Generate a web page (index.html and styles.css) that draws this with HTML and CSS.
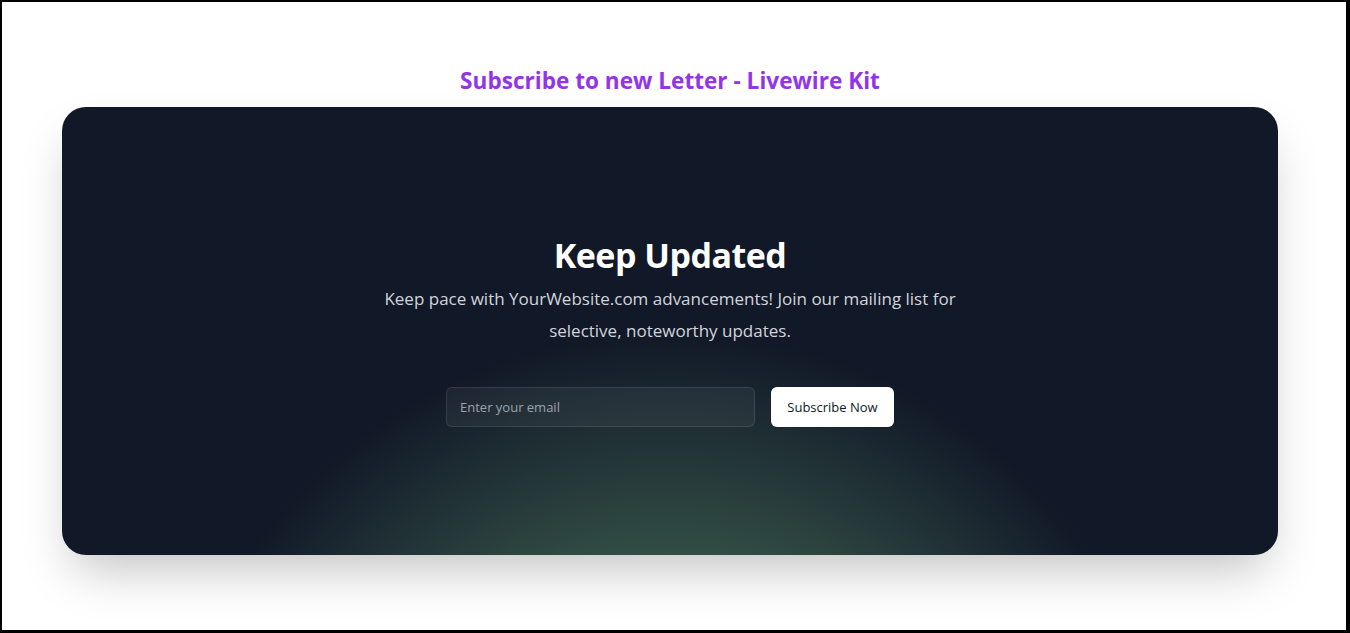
FILE: index.html
```html
<!DOCTYPE html>
<html lang="en">
<head>
  <meta charset="UTF-8" />
  <meta name="viewport" content="width=device-width, initial-scale=1.0"/>
  <title>Subscribe to new Letter - Livewire Kit</title>
  <link rel="stylesheet" href="styles.css">
</head>
<body>
  <div class="frame">
    <div class="page">
      <h2 class="page-title">Subscribe to new Letter - Livewire Kit</h2>

      <div class="wrap">
        <section class="newsletter">
          <h3>Keep Updated</h3>
          <p>Keep pace with YourWebsite.com advancements! Join our mailing list for selective, noteworthy updates.</p>

          <form class="subscribe" onsubmit="return false">
            <label for="email" class="sr-only">Email address</label>
            <input id="email" type="email" name="email" placeholder="Enter your email" autocomplete="email"/>
            <button type="submit">Subscribe Now</button>
          </form>
        </section>
      </div>
    </div>
  </div>
</body>
</html>
```

FILE: styles.css
```css
* {
  box-sizing: border-box;
}
body {
  margin: 0;
  background: white;
  font-family: "Open Sans", "Noto Sans", Arial, sans-serif;
}
.frame {
  height: 633px;
  border-style: solid;
  border-color: black;
  border-width: 2px 4px 3px 2px;
  padding-right: 8px;
  overflow: hidden;
}
.page {
  padding-top: 63px;
}
.page-title {
  margin: 0 0 10px;
  text-align: center;
  color: #9333ea;
  font-size: 22.6px;
  line-height: 32px;
  font-weight: 700;
}
.wrap {
  max-width: 1280px;
  margin: 0 auto;
  padding: 0 32px;
}
.newsletter {
  position: relative;
  overflow: hidden;
  border-radius: 24px;
  padding: 128px 24px;
  text-align: center;
  background:
    radial-gradient(circle 512px at 50% 736px, rgb(92,146,108) 0%, rgba(17,24,39,0) 100%),
    #111827;
  box-shadow: 0 25px 50px -12px rgba(0,0,0,0.25);
}
.newsletter h3 {
  margin: 0;
  color: white;
  font-size: 34px;
  line-height: 40px;
  font-weight: 700;
  letter-spacing: -0.5px;
}
.newsletter p {
  max-width: 576px;
  margin: 8px auto 0;
  color: #d1d5db;
  font-size: 17px;
  line-height: 32px;
}
.subscribe {
  display: flex;
  gap: 16px;
  max-width: 448px;
  margin: 40px auto 0;
}
.subscribe input {
  flex: 1 1 auto;
  min-width: 0;
  height: 40px;
  padding: 0 13px;
  font: inherit;
  font-size: 13px;
  line-height: 20px;
  color: white;
  background: rgba(255,255,255,0.05);
  border: 1px solid rgba(255,255,255,0.1);
  border-radius: 6px;
  outline: none;
}
.subscribe input::placeholder {
  color: #9ca3af;
}
.subscribe button {
  flex: none;
  width: 123px;
  height: 40px;
  padding: 0 14px;
  font: inherit;
  font-size: 13px;
  font-weight: 500;
  color: #111827;
  background: white;
  border: none;
  border-radius: 6px;
  box-shadow: 0 1px 2px rgba(0,0,0,0.05);
  cursor: pointer;
}
.sr-only {
  position: absolute;
  width: 1px;
  height: 1px;
  overflow: hidden;
  clip: rect(0,0,0,0);
}
```
